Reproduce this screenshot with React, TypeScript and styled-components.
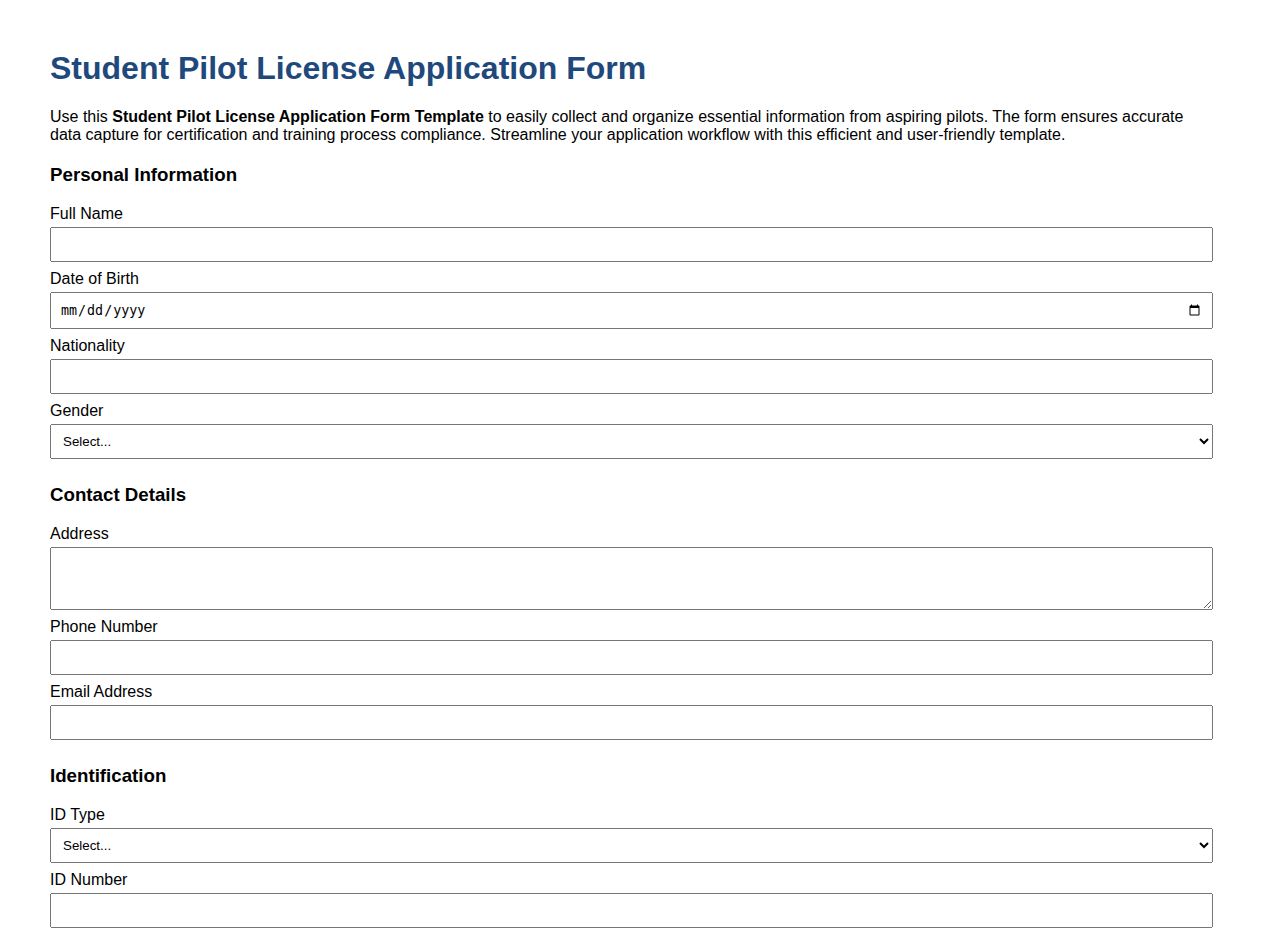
import React from "react";
import styled, { createGlobalStyle } from "styled-components";

const GlobalStyle = createGlobalStyle`
  * {
    box-sizing: border-box;
  }
  body {
    margin: 0;
    background: #ffffff;
    color: #000000;
    font-family: "Liberation Sans", Arial, sans-serif;
  }
`;

const Page = styled.div`
  padding: 29px 50px 40px;
`;

const Title = styled.h1`
  margin: 21.44px 0 20.44px;
  font-size: 32px;
  font-weight: bold;
  color: #1f497d;
`;

const Intro = styled.p`
  margin: 16px 0;
  font-size: 16px;
  line-height: 18px;
`;

const Section = styled.section`
  margin-bottom: 25px;
`;

const SectionTitle = styled.h3`
  margin: 20px 0 19px;
  font-size: 18.72px;
  font-weight: bold;
`;

const Field = styled.div`
  margin-bottom: 8px;
`;

const Label = styled.label`
  display: block;
  margin-bottom: 4px;
  font-size: 16px;
  line-height: 18px;
`;

const Input = styled.input`
  display: block;
  width: 100%;
  padding: 8px;
  margin: 0;
`;

const Select = styled.select`
  display: block;
  width: 100%;
  padding: 8px;
  margin: 0;
`;

const TextArea = styled.textarea`
  display: block;
  width: 100%;
  padding: 8px;
  margin: 0;
  height: 63px;
`;

type FieldProps = { id: string; label: string; children: React.ReactNode };

const FormField = ({ id, label, children }: FieldProps) => (
  <Field>
    <Label htmlFor={id}>{label}</Label>
    {children}
  </Field>
);

const SelectField = ({ id, label }: { id: string; label: string }) => (
  <FormField id={id} label={label}>
    <Select id={id} defaultValue="">
      <option value="">Select...</option>
    </Select>
  </FormField>
);

export default function App() {
  return (
    <>
      <GlobalStyle />
      <Page>
        <Title>Student Pilot License Application Form</Title>
        <Intro>
          Use this <strong>Student Pilot License Application Form Template</strong> to easily
          collect and organize essential information from aspiring pilots. The form ensures
          accurate data capture for certification and training process compliance. Streamline
          your application workflow with this efficient and user-friendly template.
        </Intro>

        <Section>
          <SectionTitle>Personal Information</SectionTitle>
          <FormField id="fullName" label="Full Name">
            <Input id="fullName" type="text" />
          </FormField>
          <FormField id="dob" label="Date of Birth">
            <Input id="dob" type="date" />
          </FormField>
          <FormField id="nationality" label="Nationality">
            <Input id="nationality" type="text" />
          </FormField>
          <SelectField id="gender" label="Gender" />
        </Section>

        <Section>
          <SectionTitle>Contact Details</SectionTitle>
          <FormField id="address" label="Address">
            <TextArea id="address" />
          </FormField>
          <FormField id="phone" label="Phone Number">
            <Input id="phone" type="tel" />
          </FormField>
          <FormField id="email" label="Email Address">
            <Input id="email" type="email" />
          </FormField>
        </Section>

        <Section>
          <SectionTitle>Identification</SectionTitle>
          <SelectField id="idType" label="ID Type" />
          <FormField id="idNumber" label="ID Number">
            <Input id="idNumber" type="text" />
          </FormField>
        </Section>
      </Page>
    </>
  );
}
